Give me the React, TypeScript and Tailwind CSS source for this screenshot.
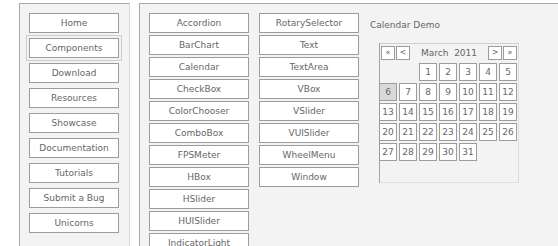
const navItems = [
  'Home',
  'Components',
  'Download',
  'Resources',
  'Showcase',
  'Documentation',
  'Tutorials',
  'Submit a Bug',
  'Unicorns',
];

const componentsLeft = [
  'Accordion',
  'BarChart',
  'Calendar',
  'CheckBox',
  'ColorChooser',
  'ComboBox',
  'FPSMeter',
  'HBox',
  'HSlider',
  'HUISlider',
  'IndicatorLight',
];

const componentsRight = [
  'RotarySelector',
  'Text',
  'TextArea',
  'VBox',
  'VSlider',
  'VUISlider',
  'WheelMenu',
  'Window',
];

// March 2011 starts on a Tuesday
const days: (number | null)[] = [null, null, ...Array.from({ length: 31 }, (_, i) => i + 1)];

const NavButton = ({ label, selected }: { label: string; selected?: boolean }) => (
  <div
    className={`h-[20px] w-[90px] border border-[#9c9c9c] bg-white flex items-center justify-center pt-[2px] text-[9px] text-[#666666] ${
      selected ? 'outline outline-1 outline-offset-2 outline-[#cdcdcd]' : ''
    }`}
  >
    {label}
  </div>
);

const CompButton = ({ label }: { label: string }) => (
  <div className="h-[20px] w-[100px] border border-[#9c9c9c] bg-white flex items-center justify-center pt-[2px] text-[9px] text-[#666666]">
    {label}
  </div>
);

const SmallButton = ({ label }: { label: string }) => (
  <div className="h-[14px] w-[14px] border border-[#9c9c9c] bg-white flex items-center justify-center text-[8px] leading-none text-[#666666]">
    {label}
  </div>
);

const Calendar = () => {
  return (
    <div className="w-[140px] h-[140px] bg-[#f3f3f3] shadow-[inset_1px_0_0_#a4a4a4,inset_0_1px_0_#cfcfcf,inset_-1px_-1px_0_#dedede]">
      {/* Month navigation */}
      <div className="h-[20px] flex items-start pt-[3px] px-[2px] gap-[1px]">
        <SmallButton label="«" />
        <SmallButton label="<" />
        <div className="flex-1 h-[14px] flex items-center justify-center pt-[1px] text-[9px] text-[#666666] whitespace-pre">
          March  2011
        </div>
        <SmallButton label=">" />
        <SmallButton label="»" />
      </div>
      {/* Day grid */}
      <div className="grid grid-cols-[repeat(7,18px)] auto-rows-[18px] gap-[2px]">
        {days.map((d, i) =>
          d === null ? (
            <div key={i} />
          ) : (
            <div
              key={i}
              className={`border border-[#9c9c9c] flex items-center justify-center pt-[1px] text-[9px] text-[#666666] ${
                d === 6 ? 'bg-[#d9d9d9]' : 'bg-white'
              }`}
            >
              {d}
            </div>
          )
        )}
      </div>
    </div>
  );
};

const App = () => {
  return (
    <div
      className="w-[558px] h-[246px] overflow-hidden bg-white flex gap-[9px] pt-[3px] pl-[19px]"
      style={{ fontFamily: '"DejaVu Sans", "Liberation Sans", sans-serif' }}
    >
      {/* Site navigation */}
      <div className="w-[111px] h-[260px] shrink-0 bg-[#f3f3f3] border-t border-l border-[#a9a9a9] border-r border-r-[#dadada] pl-[9px] pt-[9px] flex flex-col gap-[5px]">
        {navItems.map((item) => (
          <NavButton key={item} label={item} selected={item === 'Components'} />
        ))}
      </div>

      {/* Components panel */}
      <div className="flex-1 h-[260px] bg-[#f3f3f3] border-t border-l border-[#a9a9a9] pl-[9px] pt-[9px] flex items-start">
        <div className="grid grid-cols-[100px_100px] gap-x-[10px] gap-y-[2px]">
          <div className="flex flex-col gap-[2px]">
            {componentsLeft.map((c) => (
              <CompButton key={c} label={c} />
            ))}
          </div>
          <div className="flex flex-col gap-[2px]">
            {componentsRight.map((c) => (
              <CompButton key={c} label={c} />
            ))}
          </div>
        </div>

        {/* Demo area */}
        <div className="ml-[11px] flex flex-col">
          <div className="h-[20px] pt-[2px] leading-[20px] text-[9px] text-[#666666]">Calendar Demo</div>
          <div className="mt-[10px] ml-[9px]">
            <Calendar />
          </div>
        </div>
      </div>
    </div>
  );
};

export default App;
